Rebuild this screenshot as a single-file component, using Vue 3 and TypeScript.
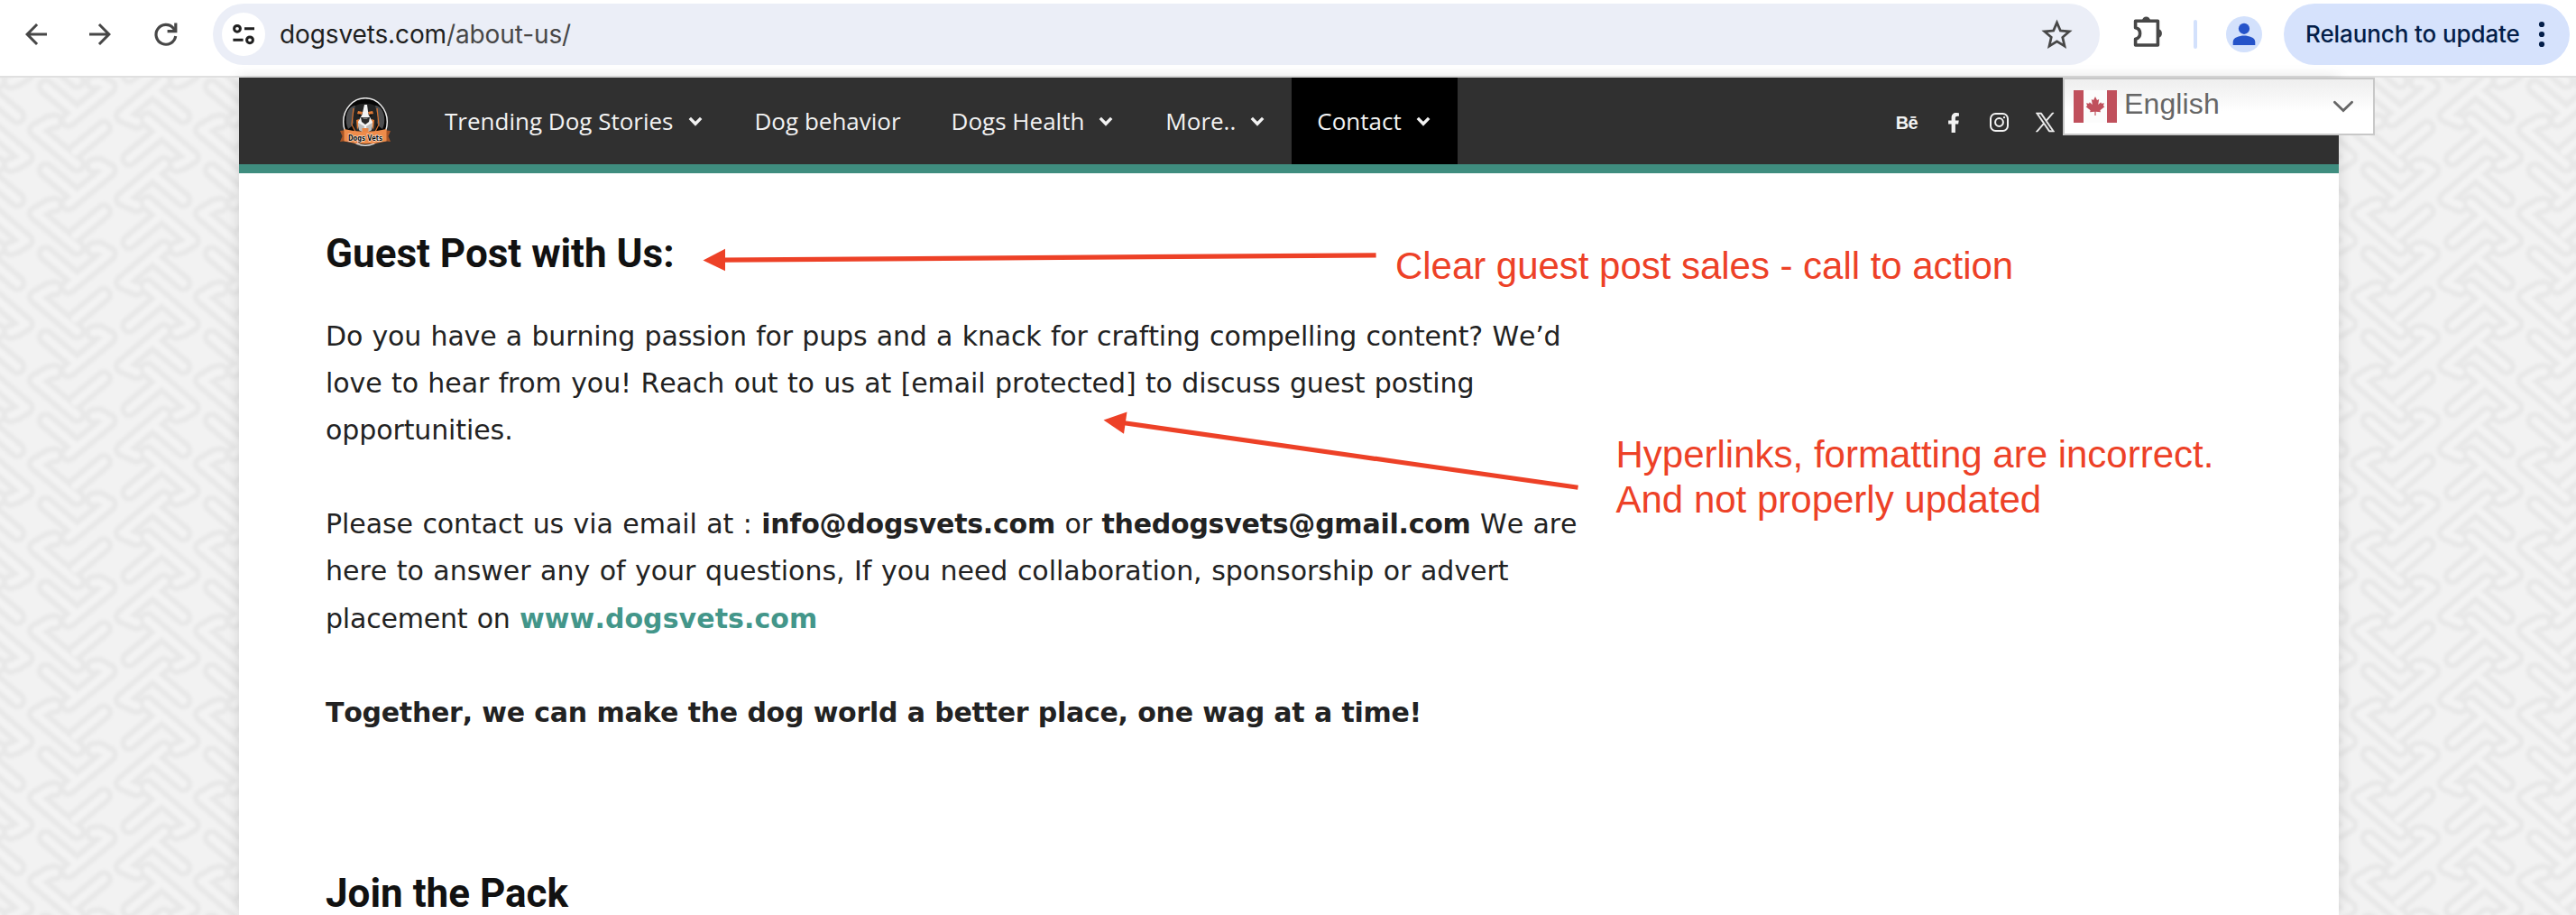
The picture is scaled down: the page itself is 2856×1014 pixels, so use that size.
<script setup lang="ts">
interface NavItem {
  label: string
  caret: boolean
  active?: boolean
}

const navItems: NavItem[] = [
  { label: 'Trending Dog Stories', caret: true },
  { label: 'Dog behavior', caret: false },
  { label: 'Dogs Health', caret: true },
  { label: 'More..', caret: true },
  { label: 'Contact', caret: true, active: true },
]

const weaveCore =
  'M152 26L248 106M514 44L610 124M249 243L345 163M430 265L526 185' +
  'M182 141L165 144L120 170L256 284M312 288L330 286L362 304L228 414M455 142L440 136L408 122L545 6M588 286L605 280L638 260L490 134'
</script>

<template>
  <div class="window">
    <header class="toolbar">
      <svg class="tb-icon back" viewBox="0 0 24 24"><path fill="#474747" d="M20 11H7.83l5.59-5.59L12 4l-8 8 8 8 1.41-1.41L7.83 13H20v-2z" /></svg>
      <svg class="tb-icon forward" viewBox="0 0 24 24"><path fill="#474747" d="M12 4l-1.41 1.41L16.17 11H4v2h12.17l-5.58 5.59L12 20l8-8z" /></svg>
      <svg class="tb-icon reload" viewBox="0 0 36 36" fill="none" stroke="#474747" stroke-width="3.2">
        <path d="M28.7 20A10.9 10.9 0 1 1 26.2 11.2L29 14.4" /><path d="M28.8 5.6v9.1H19.6" />
      </svg>
      <div class="omnibox">
        <span class="site-info">
          <svg viewBox="0 0 48 48" width="48" height="48" fill="none" stroke="#1f1f1f" stroke-width="3">
            <circle cx="17" cy="17.8" r="3.4" /><path d="M25 17.8h11M12.4 30.3h11.2" /><circle cx="31" cy="30.3" r="3.4" />
          </svg>
        </span>
        <span class="url">dogsvets.com<span class="path">/about-us/</span></span>
        <svg class="star" viewBox="0 0 24 24"><path fill="#474747" d="M22 9.24l-7.19-.62L12 2 9.19 8.63 2 9.24l5.46 4.73L5.82 21 12 17.27 18.18 21l-1.63-7.03L22 9.24zM12 15.4l-3.76 2.27 1-4.28-3.32-2.88 4.38-.38L12 6.1l1.71 4.04 4.38.38-3.32 2.88 1 4.28L12 15.4z" /></svg>
      </div>
      <svg class="puzzle" viewBox="0 0 40 40">
        <path fill="none" stroke="#474747" stroke-width="3.6" stroke-linejoin="round" d="M5.6 8.2H30.4V35H5.6V28.2C9 27.6 10.6 25 10.6 22S9 16.4 5.6 15.8Z" />
        <path fill="#474747" d="M13 8a4.5 4.5 0 0 1 9 0zM31 17.3a4.9 4.9 0 0 1 0 9.6z" />
      </svg>
      <span class="divider"></span>
      <svg class="avatar" viewBox="0 0 40 40">
        <circle cx="20" cy="20" r="20" fill="#d3e1fc" />
        <circle cx="20" cy="13.8" r="6.1" fill="#2553c9" />
        <path fill="#2553c9" d="M7.7 32v-3.4c0-5 7-7 12.3-7s12.3 2 12.3 7V32z" />
      </svg>
      <div class="relaunch">
        <span>Relaunch to update</span>
        <svg width="8" height="32" viewBox="0 0 8 32" fill="#041e49"><circle cx="4" cy="5" r="3.1" /><circle cx="4" cy="16" r="3.1" /><circle cx="4" cy="27" r="3.1" /></svg>
      </div>
    </header>

    <div class="viewport">
      <svg class="weave" aria-hidden="true">
        <defs>
          <pattern id="weave" width="552" height="277.5" patternUnits="userSpaceOnUse" patternTransform="translate(0 94) scale(.3333)">
            <rect width="552" height="277.5" fill="#f2f2f2" />
            <g v-for="layer in [{ c: '#e8e8e8', w: 60 }, { c: '#f3f3f3', w: 24 }]" :key="layer.w" fill="none" :stroke="layer.c" :stroke-width="layer.w" stroke-linecap="round" stroke-linejoin="round">
              <g v-for="dy in [-277.5, 0, 277.5]" :key="dy" :transform="`translate(0 ${dy})`">
                <path v-for="dx in [-552, 0, 552]" :key="dx" :transform="`translate(${dx} 0)`" :d="weaveCore" />
              </g>
            </g>
          </pattern>
          <filter id="soft"><feGaussianBlur stdDeviation="1.6" /></filter>
        </defs>
        <rect x="-10" y="-10" width="2880" height="960" fill="url(#weave)" filter="url(#soft)" />
      </svg>

      <div class="page">
        <nav class="nav">
          <svg class="logo" viewBox="0 0 56 56">
            <ellipse cx="28" cy="27" rx="24.3" ry="26.3" fill="#070707" stroke="#e9e9e9" stroke-width="1.5" />
            <path fill="#4c4d4f" d="M17 9c-5 0-9 5-10 12-.6 5 0 10 2 14l5-4 4-12zM39 9c5 0 9 5 10 12 .6 5 0 10-2 14l-5-4-4-12z" />
            <path fill="#232323" d="M17 9c6-3 16-3 22 0l3 13-3 17H17l-3-17z" />
            <path fill="none" stroke="#d9722f" stroke-width="1.2" d="M15 12l-2 18 4 8M41 12l2 18-4 8" />
            <path fill="#e07a35" d="M20 15l5 1-1 3-5-1zM36 15l-5 1 1 3 5-1zM18 25l3-1 1 5-3 7zM38 25l-3-1-1 5 3 7z" />
            <path fill="#f4f4f4" d="M27 8h3l1.500 11 4.500 8-1 9-7 3-7-3-1-9 4.500-8z" />
            <path fill="#bcbcbc" d="M20 28l7 4-1 7-5-3zM36 28l-7 4 1 7 5-3z" />
            <path fill="#2a2a2a" d="M23 22h10l-1 5-4 3-4-3z" />
            <path fill="#777" d="M25 22.500h6l-1 1.600h-4z" />
            <circle cx="22" cy="19.800" r="1.300" fill="#111" /><circle cx="34" cy="19.800" r="1.300" fill="#111" />
            <path fill="#e88545" d="M24.500 34h7v3.500l-3.500 2-3.500-2z" />
            <path fill="#a85425" d="M0 37l8-1v12l-8 1 2.500-6zM56 37l-8-1v12l8 1-2.500-6z" />
            <path fill="#ee8c4b" d="M4.500 35q23.500 6 47 0v13.500q-23.500 6-47 0z" />
            <text x="28" y="47.500" text-anchor="middle" textLength="38" lengthAdjust="spacingAndGlyphs" class="logo-text">Dogs Vets</text>
          </svg>
          <ul class="menu">
            <li v-for="item in navItems" :key="item.label" :class="{ active: item.active }">
              {{ item.label }}
              <svg v-if="item.caret" class="caret" viewBox="0 0 16 11"><path d="M1.800 1.900L8 8.300l6.200-6.400" fill="none" stroke="currentColor" stroke-width="3.400" /></svg>
            </li>
          </ul>
          <div class="social">
            <span class="behance">Bē</span>
            <svg class="fb" viewBox="0 0 320 512"><path fill="currentColor" d="M279.140 288l14.220-92.660h-88.910v-60.130c0-25.350 12.420-50.060 52.240-50.060h40.420V6.260S260.430 0 225.360 0c-73.220 0-121.080 44.380-121.080 124.720v70.620H22.890V288h81.390v224h100.170V288z" /></svg>
            <svg class="ig" viewBox="0 0 21 21" fill="none" stroke="currentColor" stroke-width="2"><rect x="1" y="1" width="19" height="19" rx="5.500" /><circle cx="10.500" cy="10.500" r="4.400" /><circle cx="16" cy="5.100" r="1.200" fill="currentColor" stroke="none" /></svg>
            <svg class="x" viewBox="0 0 24 24"><path fill="currentColor" stroke="currentColor" stroke-width=".7" d="M14.234 10.162 22.977 0h-2.072l-7.591 8.824L7.251 0H.258l9.168 13.343L.258 24H2.330l8.016-9.318L16.749 24h6.993zm-2.837 3.299-.929-1.329L3.076 1.560h3.182l5.965 8.532.929 1.329 7.754 11.090h-3.182z" /></svg>
          </div>
        </nav>

        <main class="content">
          <h2>Guest Post with Us:</h2>
          <p>
            <span class="line l1">Do you have a burning passion for pups and a knack for crafting compelling content? We’d</span>
            <span class="line l2">love to hear from you! Reach out to us at [email protected] to discuss guest posting</span>
            <span class="line l3">opportunities.</span>
          </p>
          <p>
            <span class="line l4">Please contact us via email at : <b class="tight">info@dogsvets.com</b> or <b class="tight">thedogsvets@gmail.com</b> We are</span>
            <span class="line l5">here to answer any of your questions, If you need collaboration, sponsorship or advert</span>
            <span class="line l6">placement on <a>www.dogsvets.com</a></span>
          </p>
          <p><b class="closing">Together, we can make the dog world a better place, one wag at a time!</b></p>
          <h2 class="second">Join the Pack</h2>
        </main>
      </div>

      <div class="language">
        <svg class="flag" viewBox="0 0 48 36">
          <rect width="48" height="36" fill="#fcfcfc" />
          <path fill="#c0505c" d="M0 0h11v36H0zM37 0h11v36H37z" />
          <path fill="#c0505c" d="M24 7l2 4 2.200-1-1 6 3-2.800.7 1.600 3-.5-1 3 1.500 1-5 4 .5 2-5.300-.5V28h-1.200v-4.200l-5.300.5.500-2-5-4 1.500-1-1-3 3 .5.700-1.600 3 2.800-1-6 2.200 1z" />
        </svg>
        <span>English</span>
        <svg class="lang-caret" viewBox="0 0 24 14"><path d="M2.400 2.200L12 11.500l9.600-9.300" fill="none" stroke="#666" stroke-width="2.800" stroke-linecap="round" /></svg>
      </div>
    </div>

    <svg class="arrows" viewBox="0 0 2856 1014" fill="#ed4127" stroke="#ed4127">
      <path d="M800 288.200L1525.600 282.800" stroke-width="5.200" />
      <path d="M779.500 288.400L804 275.700V300.200z" stroke="none" />
      <path d="M1243 468.300L1749.500 540.300" stroke-width="5.200" />
      <path d="M1223.500 465.400L1249.500 456.500L1246 480.700z" stroke="none" />
    </svg>
    <div class="note first">Clear guest post sales - call to action</div>
    <div class="note other">Hyperlinks, formatting are incorrect.<br />And not properly updated</div>
  </div>
</template>

<style>
body {
  margin: 0;
  background: #fff;
}
</style>

<style scoped>
.window {
  position: relative;
  width: 2856px;
  height: 1014px;
  overflow: hidden;
  background: #fff;
}
.toolbar {
  box-sizing: border-box;
  display: flex;
  align-items: flex-start;
  height: 86px;
  padding-left: 22px;
  border-bottom: 2px solid #e0e0e0;
}
.toolbar > svg,
.toolbar > span,
.toolbar > div {
  flex: none;
}
.tb-icon {
  width: 36px;
  height: 36px;
  margin-top: 20px;
}
.forward {
  margin-left: 35px;
}
.reload {
  margin-left: 37px;
}
.omnibox {
  box-sizing: border-box;
  display: flex;
  align-items: center;
  width: 2092px;
  height: 68px;
  margin: 4px 0 0 34px;
  padding: 0 27px 0 10px;
  border-radius: 34px;
  background: #ebeef7;
}
.site-info {
  width: 48px;
  height: 48px;
  border-radius: 50%;
  background: #fff;
}
.url {
  flex: 1;
  margin-left: 16px;
  font: 400 28px/40px Inter, sans-serif;
  letter-spacing: -0.12px;
  color: #1f1f1f;
}
.path {
  color: #474747;
}
.star {
  width: 41px;
  height: 41px;
}
.puzzle {
  width: 40px;
  height: 40px;
  margin: 15px 0 0 34px;
}
.divider {
  width: 4px;
  height: 32px;
  margin: 22px 0 0 30px;
  border-radius: 2px;
  background: #d3e1fc;
}
.avatar {
  width: 40px;
  height: 40px;
  margin: 18px 0 0 32px;
}
.relaunch {
  box-sizing: border-box;
  display: flex;
  align-items: center;
  justify-content: space-between;
  width: 317px;
  height: 68px;
  margin: 4px 0 0 24px;
  padding: 0 27px 0 24px;
  border-radius: 34px;
  background: #d6e2fc;
  font: 450 26px/40px Inter, sans-serif;
  letter-spacing: -0.1px;
  color: #041e49;
}
.viewport {
  position: relative;
  height: 928px;
}
.weave {
  position: absolute;
  inset: 0;
  width: 2856px;
  height: 928px;
}
.page {
  position: relative;
  width: 2328px;
  height: 928px;
  margin-left: 265px;
  background: #fff;
  box-shadow: 0 0 14px rgba(0, 0, 0, 0.13);
}
.nav {
  box-sizing: border-box;
  display: flex;
  align-items: center;
  height: 106px;
  padding: 0 0 0 112px;
  border-bottom: 10px solid #3f8d7f;
  background: #303030;
  color: #f2f2f2;
}
.logo {
  width: 56px;
  height: 56px;
  margin-top: 3px;
}
.logo-text {
  font: 700 9.5px "DejaVu Sans", sans-serif;
  fill: #111;
  stroke: #fff;
  stroke-width: 1.2px;
  paint-order: stroke;
}
.menu {
  display: flex;
  height: 96px;
  margin: 0 0 0 32px;
  padding: 0;
  list-style: none;
  font: 400 26px/96px "Open Sans", sans-serif;
  white-space: nowrap;
}
.menu li {
  display: flex;
  align-items: center;
  gap: 16px;
  padding: 0 30px 0 28px;
}
.menu li:nth-child(2) {
  padding-right: 28px;
}
.menu li.active {
  background: #000;
}
.caret {
  width: 16px;
  height: 11px;
}
.social {
  display: flex;
  align-items: center;
  margin: 3px 0 0 486px;
}
.behance {
  width: 26px;
  font: 700 20px/30px "Liberation Sans", sans-serif;
  letter-spacing: -0.6px;
}
.fb {
  width: 14px;
  height: 22px;
  margin-left: 31px;
}
.ig {
  width: 21px;
  height: 21px;
  margin-left: 33px;
}
.x {
  width: 21px;
  height: 21px;
  margin-left: 30px;
  overflow: visible;
}
.content {
  padding: 63px 0 0 96px;
}
h2 {
  margin: 0 0 40px;
  font: 700 44px/52px Roboto, sans-serif;
  color: #111;
  white-space: nowrap;
}
h2.second {
  margin: 148px 0 0;
}
p {
  margin: 0 0 52.1px;
  font: 400 30px/52.1px "DejaVu Sans", Verdana, sans-serif;
  font-kerning: none;
  word-spacing: 1px;
  color: #222;
  white-space: nowrap;
}
.line {
  display: block;
}
.l1 {
  letter-spacing: -0.16px;
}
.l2 {
  letter-spacing: -0.09px;
}
.l3 {
  letter-spacing: -0.1px;
}
.l4 {
  letter-spacing: -0.07px;
}
.l5 {
  letter-spacing: -0.02px;
}
.l6 {
  letter-spacing: -0.2px;
}
.tight {
  letter-spacing: -0.24px;
}
.closing {
  word-spacing: 0.3px;
  letter-spacing: -0.26px;
}
a {
  font-weight: 700;
  letter-spacing: 0.08px;
  color: #43968a;
}
.language {
  position: absolute;
  top: 0;
  left: 2287px;
  box-sizing: border-box;
  display: flex;
  align-items: flex-start;
  width: 346px;
  height: 64px;
  border: 2px solid #c8c8c8;
  background: linear-gradient(#eee, #fff 60%);
  font: 400 32px/36px "Liberation Sans", sans-serif;
  letter-spacing: 0.14px;
  color: #666;
}
.flag {
  width: 48px;
  height: 36px;
  margin: 12px 0 0 10px;
}
.language span {
  flex: 1;
  margin: 9px 0 0 8px;
}
.lang-caret {
  width: 24px;
  height: 14px;
  margin: 23px 21px 0 0;
}
.arrows {
  position: absolute;
  inset: 0;
  width: 2856px;
  height: 1014px;
}
.note {
  position: absolute;
  font: 400 42px/50px "Liberation Sans", Arial, sans-serif;
  color: #ed4127;
  white-space: nowrap;
}
.note.first {
  left: 1547px;
  top: 270px;
  letter-spacing: -0.03px;
}
.note.other {
  left: 1791.5px;
  top: 479px;
}
</style>
